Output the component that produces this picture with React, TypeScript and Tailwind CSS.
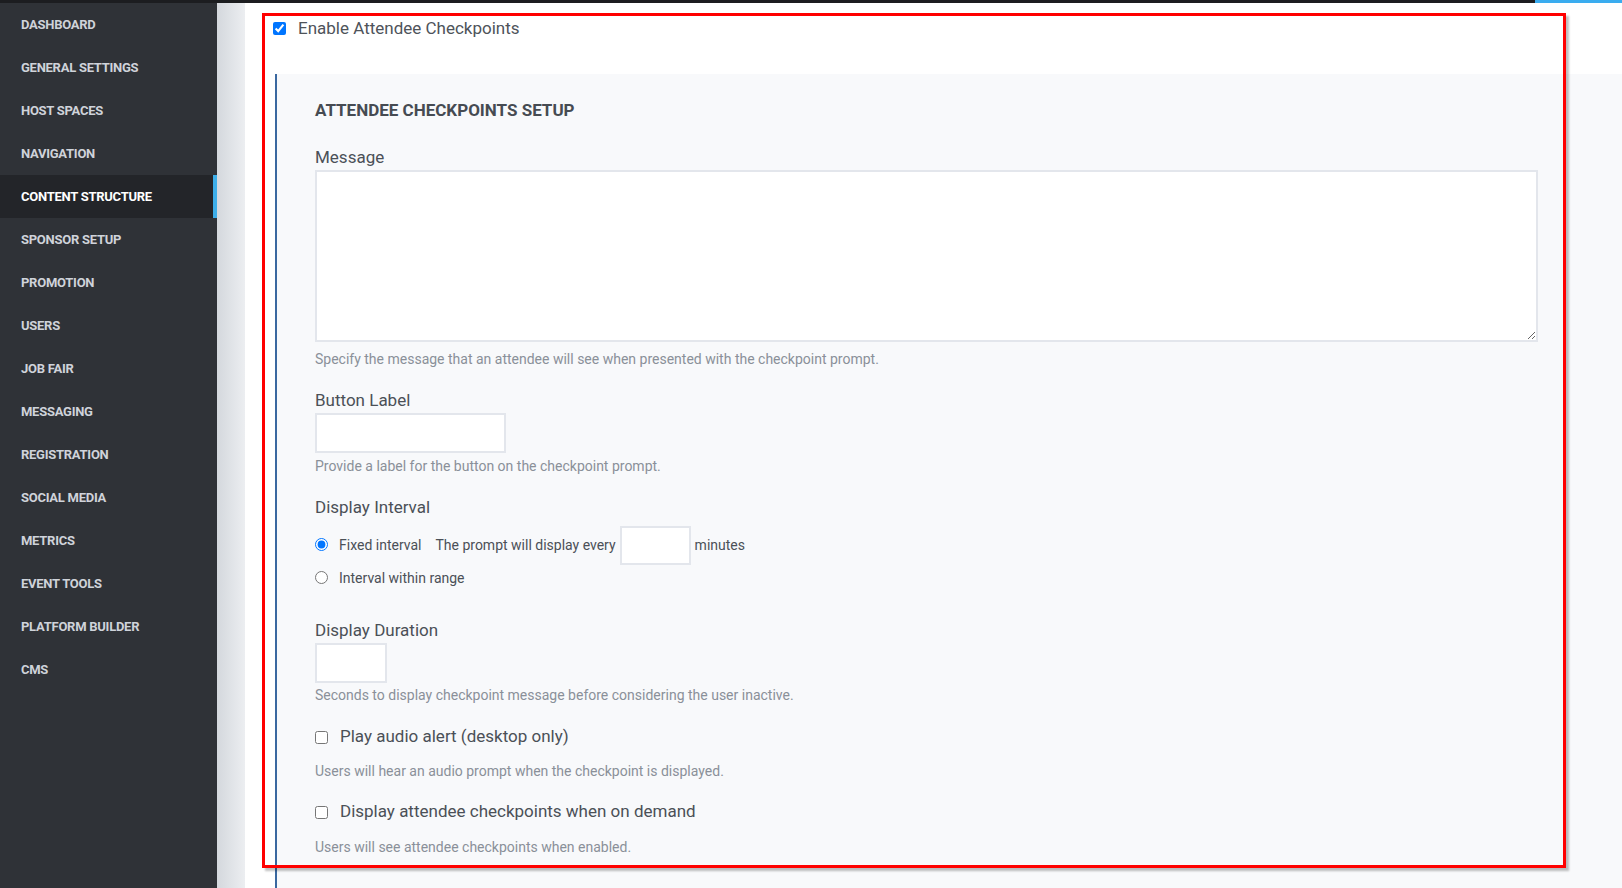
import React from "react";

const items = [
  "DASHBOARD",
  "GENERAL SETTINGS",
  "HOST SPACES",
  "NAVIGATION",
  "CONTENT STRUCTURE",
  "SPONSOR SETUP",
  "PROMOTION",
  "USERS",
  "JOB FAIR",
  "MESSAGING",
  "REGISTRATION",
  "SOCIAL MEDIA",
  "METRICS",
  "EVENT TOOLS",
  "PLATFORM BUILDER",
  "CMS",
];

export default function App() {
  return (
    <div className="relative w-[1622px] h-[888px] overflow-hidden flex flex-col bg-white font-['Roboto','Liberation_Sans',sans-serif]">
      <div className="flex h-[3px] shrink-0">
        <div className="flex-1 bg-[#1c1d20]" />
        <div className="w-[87px] h-[4px] bg-[#3aacef]" />
      </div>
      <div className="flex flex-1 min-h-0">
        <aside className="w-[217px] shrink-0 bg-[#2f3237]">
          {items.map((it) => {
            const active = it === "CONTENT STRUCTURE";
            return (
              <div
                key={it}
                className={
                  active
                    ? "h-[43px] flex items-center pl-[21px] text-[13px] font-bold tracking-[-0.02em] text-white bg-[#232529] border-r-4 border-[#3daee9]"
                    : "h-[43px] flex items-center pl-[21px] text-[13px] font-bold tracking-[-0.02em] text-[#cfd3da]"
                }
              >
                {it}
              </div>
            );
          })}
        </aside>
        <div className="w-[28px] shrink-0 bg-gradient-to-r from-[#d4d8dd] to-[#eceef1]" />
        <main className="flex-1 flex flex-col bg-white min-w-0">
          <label className="flex items-center h-[48px] pl-[28px] pt-[3px] gap-[12px] text-[17px] text-[#4e535a]">
            <input type="checkbox" defaultChecked className="w-[13px] h-[13px] m-0" />
            <span>Enable Attendee Checkpoints</span>
          </label>
          <div className="h-[23px]" />
          <section className="ml-[30px] flex-1 border-l-2 border-[#3a68a0] bg-[#f8f9fb] pl-[38px] pr-[84px] pt-[26px] text-[#4b5057]">
            <h2 className="text-[17px] leading-[20px] font-bold text-[#464b52]">ATTENDEE CHECKPOINTS SETUP</h2>
            <div className="mt-[27px] text-[17px] leading-[20px]">Message</div>
            <textarea className="mt-[3px] block w-full h-[172px] border-2 border-[#e3e6ec] bg-white outline-none" />
            <p className="mt-[7px] text-[14px] leading-[20px] text-[#8a9099]">
              Specify the message that an attendee will see when presented with the checkpoint prompt.
            </p>
            <div className="mt-[21px] text-[17px] leading-[20px]">Button Label</div>
            <input type="text" className="mt-[3px] block w-[191px] h-[40px] border-2 border-[#e3e6ec] bg-white outline-none" />
            <p className="mt-[3px] text-[14px] leading-[20px] text-[#8a9099]">
              Provide a label for the button on the checkpoint prompt.
            </p>
            <div className="mt-[21px] text-[17px] leading-[20px]">Display Interval</div>
            <div className="mt-[9px] flex items-center h-[39px] text-[14px]">
              <input type="radio" name="iv" defaultChecked className="w-[13px] h-[13px] m-0 -mt-[3px]" />
              <span className="ml-[11px]">Fixed interval</span>
              <span className="ml-[14px]">The prompt will display every</span>
              <input type="text" className="ml-[4px] w-[71px] h-[39px] border-2 border-[#e3e6ec] bg-white outline-none" />
              <span className="ml-[4px]">minutes</span>
            </div>
            <div className="mt-[3px] flex items-center h-[20px] text-[14px]">
              <input type="radio" name="iv" className="w-[13px] h-[13px] m-0 -mt-[2px]" />
              <span className="ml-[11px]">Interval within range</span>
            </div>
            <div className="mt-[32px] text-[17px] leading-[20px]">Display Duration</div>
            <input type="text" className="mt-[3px] block w-[72px] h-[40px] border-2 border-[#e3e6ec] bg-white outline-none" />
            <p className="mt-[2px] text-[14px] leading-[20px] text-[#8a9099]">
              Seconds to display checkpoint message before considering the user inactive.
            </p>
            <label className="mt-[20px] flex items-center h-[24px] text-[17px]">
              <input type="checkbox" className="w-[13px] h-[13px] m-0" />
              <span className="ml-[12px]">Play audio alert (desktop only)</span>
            </label>
            <p className="mt-[12px] text-[14px] leading-[20px] text-[#8a9099]">
              Users will hear an audio prompt when the checkpoint is displayed.
            </p>
            <label className="mt-[19px] flex items-center h-[24px] text-[17px]">
              <input type="checkbox" className="w-[13px] h-[13px] m-0" />
              <span className="ml-[12px]">Display attendee checkpoints when on demand</span>
            </label>
            <p className="mt-[13px] text-[14px] leading-[20px] text-[#8a9099]">
              Users will see attendee checkpoints when enabled.
            </p>
          </section>
        </main>
      </div>
      <div className="pointer-events-none absolute left-[262px] top-[13px] w-[1304px] h-[855px] border-[3px] border-[#ff0000] shadow-[3px_3px_2px_rgba(0,0,0,0.25)]" />
    </div>
  );
}
